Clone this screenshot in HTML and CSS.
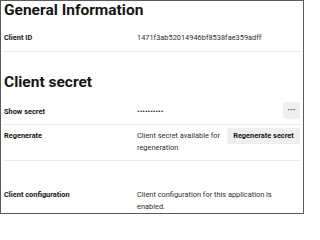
FILE: index.html
```html
<!DOCTYPE html>
<html>
<head>
<meta charset="utf-8">
<link rel="stylesheet" href="styles.css">
</head>
<body>
<div class="frame">
  <h1 class="title">General Information</h1>
  <div class="row row-id">
    <div class="label">Client ID</div>
    <div class="value">1471f3ab52014946bf8538fae359adff</div>
  </div>
  <h2 class="title title-secret">Client secret</h2>
  <div class="row row-show">
    <div class="label">Show secret</div>
    <div class="value dots">••••••••••</div>
    <button class="btn btn-more" aria-label="More">···</button>
  </div>
  <div class="row row-regen">
    <div class="label">Regenerate</div>
    <div class="value">Client secret available for regeneration</div>
    <button class="btn btn-regen">Regenerate secret</button>
  </div>
  <div class="row row-config">
    <div class="label">Client configuration</div>
    <div class="value">Client configuration for this application is enabled.</div>
  </div>
</div>
</body>
</html>
```
FILE: styles.css
```css
html, body {
  margin: 0;
  padding: 0;
  background: #ffffff;
}
.frame {
  box-sizing: border-box;
  width: 304px;
  height: 214px;
  border: 1px solid #5a5a5a;
  padding: 0 3px 0 3px;
  overflow: hidden;
  font-family: Roboto, "Noto Sans", sans-serif;
  color: #161513;
}
.title {
  margin: 0;
  font-size: 15.5px;
  line-height: 18px;
  font-weight: 700;
}
.title-secret {
  margin-top: 21px;
}
.row {
  display: flex;
  align-items: flex-start;
  border-bottom: 1px solid #e8e8e8;
  font-size: 7.4px;
  line-height: 12px;
}
.row-config {
  border-bottom: none;
  padding-top: 28px;
}
.label {
  width: 133px;
  flex: none;
  font-weight: 700;
}
.value {
  flex: 1;
  color: #2e2e2e;
}
.row-id {
  padding: 13px 0 7px;
}
.row-show {
  padding: 11px 0 5px;
}
.row-show .label,
.row-show .value {
  margin-top: 4px;
}
.dots {
  font-size: 7.8px;
  color: #161513;
}
.row-regen {
  padding: 3px 0 6px;
}
.row-regen .label,
.row-regen .value {
  margin-top: 2px;
}
.btn {
  flex: none;
  border: none;
  border-radius: 3px;
  background: #efefef;
  color: #161513;
  font-family: inherit;
  font-weight: 700;
  padding: 0;
}
.btn-more {
  width: 17px;
  height: 17px;
  font-size: 9px;
  line-height: 17px;
  color: #555;
}
.btn-regen {
  width: 73px;
  height: 16px;
  font-size: 7.4px;
  line-height: 16px;
  margin-left: 5px;
}
```
